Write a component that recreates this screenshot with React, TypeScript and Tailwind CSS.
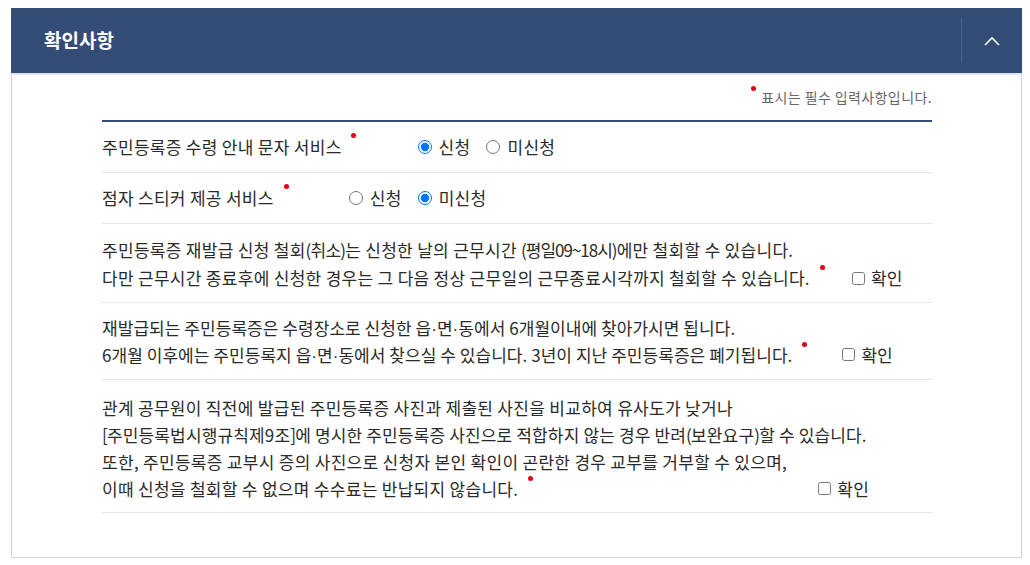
import React from 'react';

const font = { fontFamily: '"Noto Sans CJK KR", "Noto Sans", sans-serif' };

const Dot: React.FC<{ className?: string }> = ({ className = '' }) => (
  <span className={`inline-block w-[5px] h-[5px] rounded-full bg-[#e60012] align-top ${className}`} />
);

// narrow middle dot (읍·면·동)
const Mid = () => <span className="font-['Liberation_Sans'] tracking-normal leading-none">·</span>;

const Radio: React.FC<{ name: string; label: string; checked?: boolean }> = ({ name, label, checked }) => (
  <label className="inline-flex items-center gap-[7px] mr-[16px]">
    <input type="radio" name={name} defaultChecked={checked} className="m-0 w-[14px] h-[14px]" />
    <span>{label}</span>
  </label>
);

const Check: React.FC<{ className?: string }> = ({ className = '' }) => (
  <label className={`inline-flex items-center gap-[6px] ${className}`}>
    <input type="checkbox" className="m-0 w-[13px] h-[13px]" />
    <span>확인</span>
  </label>
);

export default function App() {
  return (
    <div className="w-[1030px] h-[565px] bg-white pt-[8px] pl-[11px] pr-[8px] overflow-hidden" style={font}>
      <section className="border-x border-b border-[#d4d4d4] h-[550px]">
        {/* header */}
        <div className="h-[65px] bg-[#344d77] flex items-center -mx-px border-b-2 border-[#dde3ec] box-content">
          <h2 className="pl-[33px] text-white text-[19px] font-bold flex-1">확인사항</h2>
          <div className="h-[45px] border-l border-[#4b628b]" />
          <button className="w-[60px] h-full flex items-center justify-center text-white">
            <svg width="16" height="10" viewBox="0 0 16 10" fill="none" stroke="white" strokeWidth="1.6">
              <path d="M1 9 L8 2 L15 9" />
            </svg>
          </button>
        </div>

        <div className="pl-[90px] pr-[89px] text-[#2a2a2a] text-[17px] tracking-[0.3px]">
          <p className="text-right text-[14px] tracking-[0.4px] text-[#666] pt-[12px] pb-[12px] leading-[21px]">
            <Dot className="mr-[5px] -mt-[1px]" />표시는 필수 입력사항입니다.
          </p>
          <div className="border-t-2 border-[#344d77]">
            <div className="flex items-center h-[51px] border-b border-[#e5e5e5]">
              <span>주민등록증 수령 안내 문자 서비스</span>
              <Dot className="ml-[9px] self-start mt-[11px]" />
              <div className="ml-[62px] flex items-center">
                <Radio name="sms" label="신청" checked />
                <Radio name="sms" label="미신청" />
              </div>
            </div>
            <div className="flex items-center h-[51px] border-b border-[#e5e5e5]">
              <span>점자 스티커 제공 서비스</span>
              <Dot className="ml-[10px] self-start mt-[11px]" />
              <div className="ml-[60px] flex items-center">
                <Radio name="braille" label="신청" />
                <Radio name="braille" label="미신청" checked />
              </div>
            </div>
            <div className="pt-[12px] pb-[10px] leading-[28px] border-b border-[#e5e5e5]">
              <p>주민등록증 재발급 신청 철회<span className="tracking-[-0.8px]">(취소)</span>는 신청한 날의 근무시간 <span className="tracking-[-1px]">(평일09~18시)</span>에만 철회할 수 있습니다.</p>
              <p className="flex items-center">
                <span>다만 근무시간 종료후에 신청한 경우는 그 다음 정상 근무일의 근무종료시각까지 철회할 수 있습니다.</span>
                <Dot className="ml-[10px] self-start mt-[1px]" />
                <Check className="ml-[27px]" />
              </p>
            </div>
            <div className="py-[11px] leading-[27px] border-b border-[#e5e5e5] tracking-[0.05px]">
              <p>재발급되는 주민등록증은 수령장소로 신청한 읍<Mid />면<Mid />동에서 6개월이내에 찾아가시면 됩니다.</p>
              <p className="flex items-center">
                <span>6개월 이후에는 주민등록지 읍<Mid />면<Mid />동에서 찾으실 수 있습니다. 3년이 지난 주민등록증은 폐기됩니다.</span>
                <Dot className="ml-[10px] self-start mt-[1px]" />
                <Check className="ml-[35px]" />
              </p>
            </div>
            <div className="pt-[14px] pb-[10px] leading-[27px] border-b border-[#e5e5e5]">
              <p>관계 공무원이 직전에 발급된 주민등록증 사진과 제출된 사진을 비교하여 유사도가 낮거나</p>
              <p className="tracking-[0.15px]"><span className="tracking-[-0.8px]">[</span>주민등록법시행규칙제9조<span className="tracking-[-0.8px]">]</span>에 명시한 주민등록증 사진으로 적합하지 않는 경우 반려<span className="tracking-[-0.8px]">(</span>보완요구<span className="tracking-[-0.8px]">)</span>할 수 있습니다.</p>
              <p>또한, 주민등록증 교부시 증의 사진으로 신청자 본인 확인이 곤란한 경우 교부를 거부할 수 있으며,</p>
              <p className="flex items-center">
                <span>이때 신청을 철회할 수 없으며 수수료는 반납되지 않습니다.</span>
                <Dot className="ml-[10px] self-start mt-[1px]" />
                <Check className="ml-[285px]" />
              </p>
            </div>
          </div>
        </div>
      </section>
    </div>
  );
}
